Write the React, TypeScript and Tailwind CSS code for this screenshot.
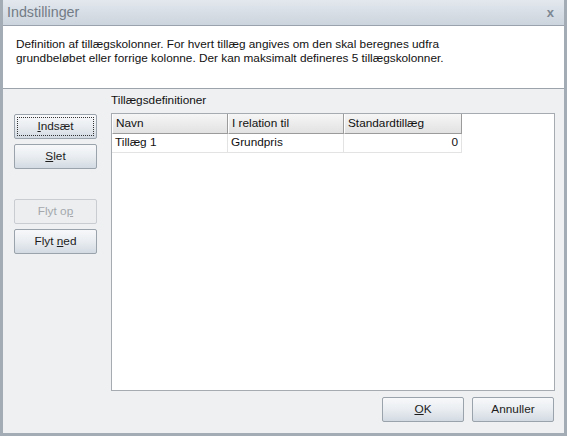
import React from "react";

const font = { fontFamily: '"Liberation Sans", Arial, sans-serif' };

function Btn({ children, disabled, focus, w = "w-[83px]" }: { children: React.ReactNode; disabled?: boolean; focus?: boolean; w?: string }) {
  return (
    <div
      className={`${w} h-[25px] rounded-[2px] border flex items-center justify-center p-[2px] ${
        disabled
          ? "border-[#c9cdd2] bg-[#eceef0] text-[#a4a8ad]"
          : "border-[#9aa2ab] bg-gradient-to-b from-[#f7f8fa] via-[#e9edf1] to-[#d3dae2] text-[#1c1c1c]"
      }`}
    >
      <div className={`w-full h-full flex items-center justify-center ${focus ? "border border-dotted border-[#333]" : ""}`}>
        {children}
      </div>
    </div>
  );
}

export default function App() {
  return (
    <div className="w-[567px] h-[436px] bg-[#a9b0b8] text-[11.8px]" style={font}>
      <div className="w-full h-full flex flex-col border-l-[3px] border-r-[3px] border-b-[3px] border-[#a3abb4]">
        <div className="h-[26px] flex items-center justify-between pl-[4px] pr-[10px] bg-gradient-to-b from-[#e3e8ee] to-[#ccd4dd] border-b border-[#9aa3ad]">
          <span className="text-[14.3px] text-[#737c86]">Indstillinger</span>
          <span className="text-[13px] font-bold text-[#7d8893]">x</span>
        </div>
        <div className="h-[63px] bg-white border-b border-[#9ca3ab] pl-[13px] pt-[11px] leading-[14px] text-[#111]">
          <div>Definition af tillægskolonner. For hvert tillæg angives om den skal beregnes udfra</div>
          <div>grundbeløbet eller forrige kolonne. Der kan maksimalt defineres 5 tillægskolonner.</div>
        </div>
        <div className="flex-1 bg-[#eef0f2] flex flex-col">
          <div className="flex flex-1">
            <div className="w-[108px] pl-[11px] pt-[25px] flex flex-col">
              <Btn focus>
                <span><u>I</u>ndsæt</span>
              </Btn>
              <div className="h-[5px]" />
              <Btn>
                <span><u>S</u>let</span>
              </Btn>
              <div className="h-[30px]" />
              <Btn disabled>
                <span>Flyt o<u>p</u></span>
              </Btn>
              <div className="h-[5px]" />
              <Btn>
                <span>Flyt <u>n</u>ed</span>
              </Btn>
            </div>
            <div className="flex-1 flex flex-col pr-[9px] pt-[5px]">
              <div className="h-[19px] leading-[13px] text-[#111]">Tillægsdefinitioner</div>
              <div className="flex-1 bg-white border border-[#a5abb1]">
                <div className="flex h-[20px] text-[#111]">
                  {[
                    ["Navn", "w-[116px]"],
                    ["I relation til", "w-[116px]"],
                    ["Standardtillæg", "w-[118px]"],
                  ].map(([t, w]) => (
                    <div
                      key={t}
                      className={`${w} h-full flex items-center pl-[3px] bg-gradient-to-b from-[#f6f6f6] to-[#e2e2e2] border-r border-b border-[#9b9b9b] border-l border-l-[#ffffff]`}
                    >
                      {t}
                    </div>
                  ))}
                </div>
                <div className="flex h-[19px] text-[#111]">
                  <div className="w-[116px] h-full flex items-center pl-[3px] border-r border-b border-[#e3e3e3]">Tillæg 1</div>
                  <div className="w-[116px] h-full flex items-center pl-[3px] border-r border-b border-[#e3e3e3]">Grundpris</div>
                  <div className="w-[118px] h-full flex items-center justify-end pr-[3px] border-r border-b border-[#e3e3e3]">0</div>
                </div>
              </div>
            </div>
          </div>
          <div className="h-[42px] flex justify-end items-start pt-[6px] pr-[10px] gap-[8px]">
            <Btn w="w-[82px]">
              <span><u>O</u>K</span>
            </Btn>
            <Btn w="w-[82px]">
              <span>Annuller</span>
            </Btn>
          </div>
        </div>
      </div>
    </div>
  );
}
